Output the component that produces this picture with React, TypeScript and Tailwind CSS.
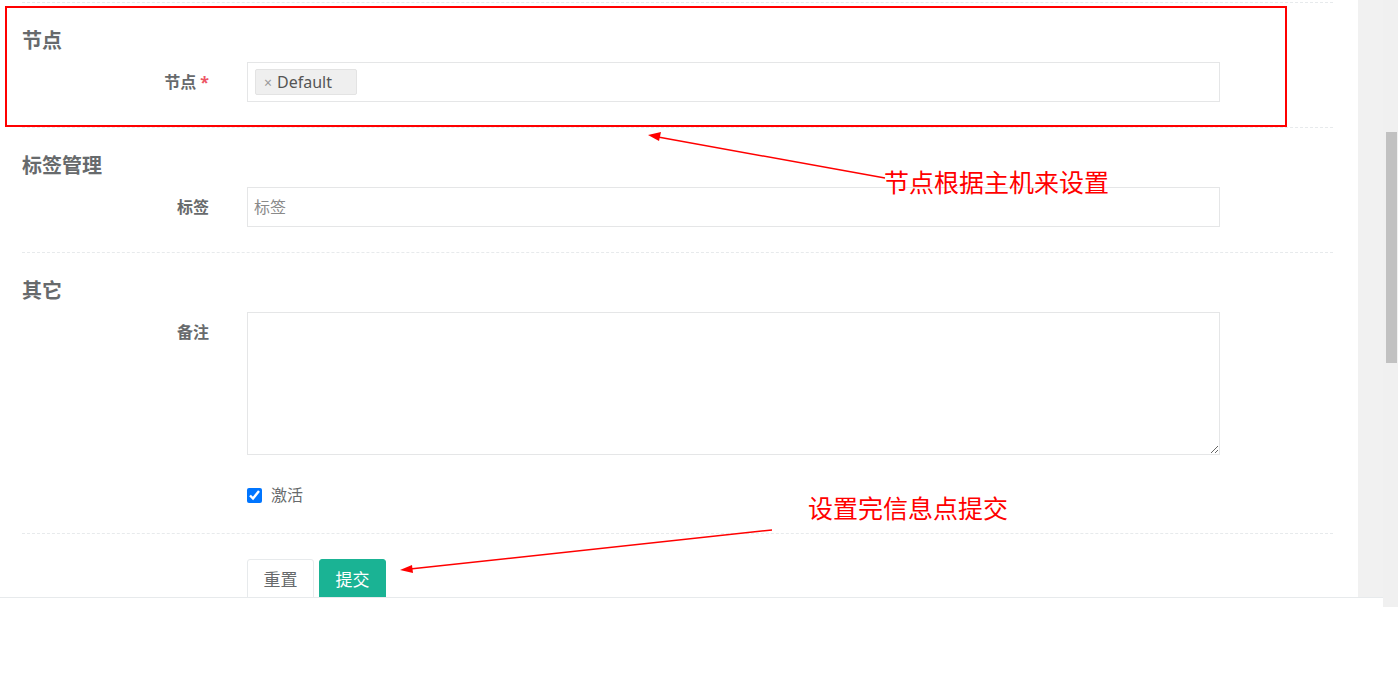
import React from "react";

const CJK = '"Noto Sans", "Noto Sans CJK SC", sans-serif';

function Label({ text, required }: { text: string; required?: boolean }) {
  return (
    <div className="w-[187px] shrink-0 pt-[10px] text-right text-[16px] leading-[20px] font-bold text-[#676a6c]">
      {text}
      {required && <span className="ml-[4px] text-[#ed5565]">*</span>}
    </div>
  );
}

function Section({ title, children }: { title: string; children: React.ReactNode }) {
  return (
    <div className="border-b border-dashed border-[#e7eaec] pt-[24px] pb-[25px]">
      <div className="h-[28px] text-[20px] leading-[28px] font-bold text-[#676a6c]">{title}</div>
      <div className="mt-[7px]">{children}</div>
    </div>
  );
}

export default function App() {
  return (
    <div className="relative w-[1398px] h-[698px] overflow-hidden bg-white" style={{ fontFamily: CJK }}>
      <div className="flex h-[597px]">
        <div className="w-[1358px] h-[597px] overflow-hidden pl-[22px] pr-[25px]">
          <div className="border-b border-dashed border-[#e7eaec] h-[3px]" />
          <Section title="节点">
            <div className="flex">
              <Label text="节点" required />
              <div className="ml-[38px] w-[973px] h-[40px] border border-[#e5e6e7] bg-white px-[7px] pt-[6px]">
                <div className="inline-flex items-center h-[26px] pl-[8px] pr-[24px] rounded-[2px] bg-[#efefef] border border-[#e3e3e3] text-[16px] text-[#555]">
                  <span className="mr-[5px] text-[14px] text-[#999]">×</span>
                  <span>Default</span>
                </div>
              </div>
            </div>
          </Section>
          <Section title="标签管理">
            <div className="flex">
              <Label text="标签" />
              <input
                placeholder="标签"
                className="ml-[38px] w-[973px] h-[40px] border border-[#e5e6e7] px-[6px] text-[16px] text-[#676a6c] placeholder:text-[#8a8a8a] outline-none"
              />
            </div>
          </Section>
          <div className="border-b border-dashed border-[#e7eaec] pt-[24px] pb-[28px]">
            <div className="h-[28px] text-[20px] leading-[28px] font-bold text-[#676a6c]">其它</div>
            <div className="mt-[7px] flex">
              <Label text="备注" />
              <textarea className="ml-[38px] w-[973px] h-[143px] border border-[#e5e6e7] outline-none block" />
            </div>
            <div className="mt-[30px] ml-[225px] flex items-center h-[20px]">
              <input type="checkbox" defaultChecked className="w-[15px] h-[15px] m-0" />
              <span className="ml-[9px] text-[16px] leading-[20px] text-[#676a6c]">激活</span>
            </div>
          </div>
          <div className="pt-[25px] pl-[225px] flex gap-[5px]">
            <button className="w-[67px] h-[42px] rounded-[3px] border border-[#e7eaec] bg-white text-[17px] text-[#676a6c]">
              重置
            </button>
            <button className="w-[67px] h-[42px] rounded-[3px] border border-[#1ab394] bg-[#1ab394] text-[17px] text-white">
              提交
            </button>
          </div>
        </div>
        <div className="w-[25px] h-[597px] bg-[#f1f1f1]" />
        <div className="w-[15px] h-[607px] bg-[#f0f0f0] pt-[132px] pl-[3px]">
          <div className="w-[11px] h-[231px] bg-[#c1c1c1]" />
        </div>
      </div>
      <div className="w-[1383px] h-[101px] border-t border-[#e7eaec] bg-white" />

      {/* annotations */}
      <div className="absolute left-[5px] top-[6px] w-[1282px] h-[121px] border-[2.5px] border-[#ff0000]" />
      <svg className="absolute left-0 top-0" width="1398" height="698">
        <line x1="885" y1="178" x2="658" y2="137" stroke="#ff0000" strokeWidth="1.5" />
        <polygon points="648,135 661,132 659,141" fill="#ff0000" />
        <line x1="772" y1="530" x2="410" y2="569" stroke="#ff0000" strokeWidth="1.5" />
        <polygon points="400,570 412,565 413,573" fill="#ff0000" />
      </svg>
      <div className="absolute left-[884px] top-[166px] text-[25px] leading-[32px] text-[#ff0000] whitespace-nowrap">
        节点根据主机来设置
      </div>
      <div className="absolute left-[808px] top-[492px] text-[25px] leading-[32px] text-[#ff0000] whitespace-nowrap">
        设置完信息点提交
      </div>
    </div>
  );
}
